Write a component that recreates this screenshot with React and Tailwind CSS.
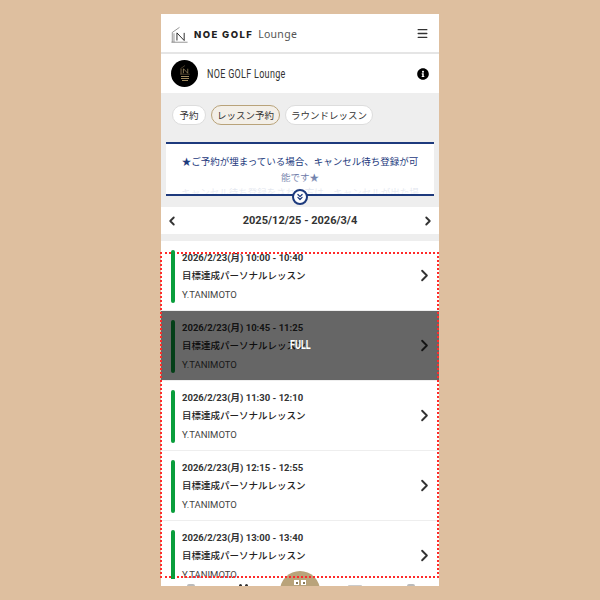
import { ChevronLeft, ChevronRight, ChevronsDown, Menu } from "lucide-react";
import { FaInfoCircle } from "react-icons/fa";

const lessons = [
  { time: "2026/2/23(月) 10:00 - 10:40" },
  { time: "2026/2/23(月) 10:45 - 11:25", full: true },
  { time: "2026/2/23(月) 11:30 - 12:10" },
  { time: "2026/2/23(月) 12:15 - 12:55" },
  { time: "2026/2/23(月) 13:00 - 13:40" },
];

function LogoMark({ className, color, letter }) {
  return (
    <svg viewBox="0 0 20 20" className={className} fill="none" stroke={color} strokeWidth="0.8">
      <path d="M1.5 18.5V7L10 1" />
      <path d="M3.5 18.5V8" />
      <path d="M0.5 18.5H19.5" />
      <path d="M7 16.5V7.5M7 7.5L15.5 16.5M15.5 16.5V7.5" stroke={letter} strokeWidth="1.1" />
    </svg>
  );
}

function LessonRow({ time, full }) {
  return (
    <div className="relative h-[70px] shrink-0 border-b border-[#eeeeee] bg-white">
      <div className="flex h-full pl-[10px] pr-[5px]">
        <div className={`mt-[9px] h-[53px] w-1 shrink-0 rounded-full ${full ? "bg-[#0a9e3c]" : "relative z-10 bg-[#0a9e3c]"}`} />
        <div className="ml-[7px] min-w-0 flex-1 pt-[10px] font-['Roboto','Noto_Sans_CJK_JP',sans-serif]">
          <p className="text-[9.5px] leading-[14px] font-bold text-[#333333]">{time}</p>
          <p className="mt-[2px] text-[9.5px] leading-[18px] font-medium text-[#222222]">目標達成パーソナルレッスン</p>
          <p className="mt-[3px] text-[9.5px] leading-[14px] text-[#444444]">Y.TANIMOTO</p>
        </div>
        <ChevronRight size={19} strokeWidth={2.4} className="mt-[25px] shrink-0 text-[#333333]" />
      </div>
      {full && (
        <div className="absolute inset-0 flex items-center justify-center bg-black/60">
          <span className="scale-x-[0.72] font-['Roboto',sans-serif] text-[12.5px] font-bold text-white">FULL</span>
        </div>
      )}
    </div>
  );
}

export default function App() {
  return (
    <div className="flex h-[600px] w-[600px] justify-center overflow-hidden bg-[#debf9f] pt-[14px] font-['Noto_Sans_CJK_JP','Noto_Sans',sans-serif]">
      <div className="relative flex h-[572px] w-[278px] flex-col overflow-hidden bg-white">
        <header className="flex h-[40px] shrink-0 items-center justify-between border-b-2 border-[#e5e5e5] pl-[10px] pr-[10px]">
          <div className="mt-[4px] flex items-center">
            <LogoMark className="h-[18px] w-[17px]" color="#666666" letter="#222222" />
            <span className="ml-[6px] font-['Inter',sans-serif] text-[9.5px] font-extrabold tracking-[1.4px] text-[#222222]">NOE GOLF</span>
            <span className="ml-[5px] font-['Noto_Sans',sans-serif] text-[10.5px] tracking-[0.3px] text-[#555555]">Lounge</span>
          </div>
          <Menu size={13} strokeWidth={2.4} className="text-[#333333]" />
        </header>

        <div className="flex h-[39px] shrink-0 items-center justify-between pl-[10px] pr-[10px]">
          <div className="flex items-center">
            <div className="flex h-[27px] w-[27px] flex-col items-center justify-center rounded-full bg-black">
              <LogoMark className="h-[10px] w-[10px]" color="#b59a6a" letter="#d9bd85" />
              <svg viewBox="0 0 10 6" className="mt-[1px] h-[6px] w-[10px]" fill="#a08a5e">
                <rect x="1" y="0" width="8" height="1" />
                <rect x="1" y="2" width="8" height="1" />
                <rect x="2" y="4" width="6" height="1" />
              </svg>
            </div>
            <span className="ml-[9px] origin-left scale-x-[0.75] font-['Roboto',sans-serif] text-[12px] tracking-[0.4px] text-[#333333]">NOE GOLF Lounge</span>
          </div>
          <FaInfoCircle size={12} className="text-black" />
        </div>

        <div className="h-[114px] shrink-0 bg-[#eeeeee]">
          <div className="flex gap-[5px] px-[11px] pt-[12px]">
            <span className="flex h-[20px] items-center rounded-full border border-[#dddddd] bg-white px-[6.5px] text-[9.5px] text-[#333333]">予約</span>
            <span className="flex h-[20px] items-center rounded-full border-[1.5px] border-[#b9a37a] bg-[#f3efe8] px-[5px] text-[9.5px] text-[#333333]">レッスン予約</span>
            <span className="flex h-[20px] items-center rounded-full border border-[#dddddd] bg-white px-[5px] text-[9.5px] text-[#333333]">ラウンドレッスン</span>
          </div>
          <div className="relative mx-[5px] mt-[17px] h-[54px] overflow-hidden border-y-2 border-[#1d3a7d] bg-white px-[14px] pt-[10px] text-center text-[9.5px] leading-[15.5px] text-[#1d3a7d]">
            <p>★ご予約が埋まっている場合、キャンセル待ち登録が可能です★</p>
            <p className="text-[#8f9dbe]">キャンセル待ち登録をされた方は、キャンセルが出た場合</p>
            <div className="absolute inset-x-0 bottom-0 h-[22px] bg-gradient-to-b from-white/20 to-white/90" />
          </div>
        </div>

        <div className="absolute left-1/2 top-[175px] flex h-[16px] w-[16px] -translate-x-1/2 items-center justify-center rounded-full border-2 border-[#1d3a7d] bg-white">
          <ChevronsDown size={10} strokeWidth={3} className="text-[#1d3a7d]" />
        </div>

        <div className="flex h-[27px] shrink-0 items-center justify-between px-[4px] pt-[1px]">
          <ChevronLeft size={14} strokeWidth={3.2} className="text-[#333333]" />
          <span className="font-['Roboto',sans-serif] text-[11px] font-bold text-[#333333]">2025/12/25 - 2026/3/4</span>
          <ChevronRight size={14} strokeWidth={3.2} className="text-[#333333]" />
        </div>

        <div className="h-[7px] shrink-0 bg-[#eeeeee]" />

        <div className="flex min-h-0 flex-1 flex-col overflow-hidden">
          {lessons.map((l) => (
            <LessonRow key={l.time} time={l.time} full={l.full} />
          ))}
        </div>

        {/* nav is almost entirely cut off by the frame */}
        <div className="flex h-[7px] shrink-0 items-end bg-white pl-[26px]">
          <div className="h-[2px] w-[8px] rounded-t-full bg-[#bbbbbb]" />
          <div className="ml-[44px] flex gap-[3px]">
            <div className="h-[2px] w-[3px] rounded-t-full bg-[#333333]" />
            <div className="h-[2px] w-[3px] rounded-t-full bg-[#333333]" />
          </div>
          <div className="ml-[100px] h-[1px] w-[14px] rounded-t-full bg-[#cccccc]" />
          <div className="ml-[45px] h-[2px] w-[8px] rounded-t-full bg-[#bbbbbb]" />
        </div>

        <div className="absolute -bottom-[5px] left-1/2 flex h-[20px] w-[40px] -translate-x-1/2 justify-center gap-[2px] rounded-t-[20px] bg-[#b9a37a] pt-[9px]">
          <div className="flex h-[5px] w-[5px] items-center justify-center bg-white">
            <div className="h-[2px] w-[2px] bg-[#8a7a5a]" />
          </div>
          <div className="flex h-[5px] w-[5px] items-center justify-center bg-white">
            <div className="h-[2px] w-[2px] bg-[#8a7a5a]" />
          </div>
        </div>
      </div>
      <div className="pointer-events-none absolute left-[160px] top-[252px] z-[5] h-[326px] w-[279px] border-2 border-dotted border-[#ff2a2a]" />
    </div>
  );
}
